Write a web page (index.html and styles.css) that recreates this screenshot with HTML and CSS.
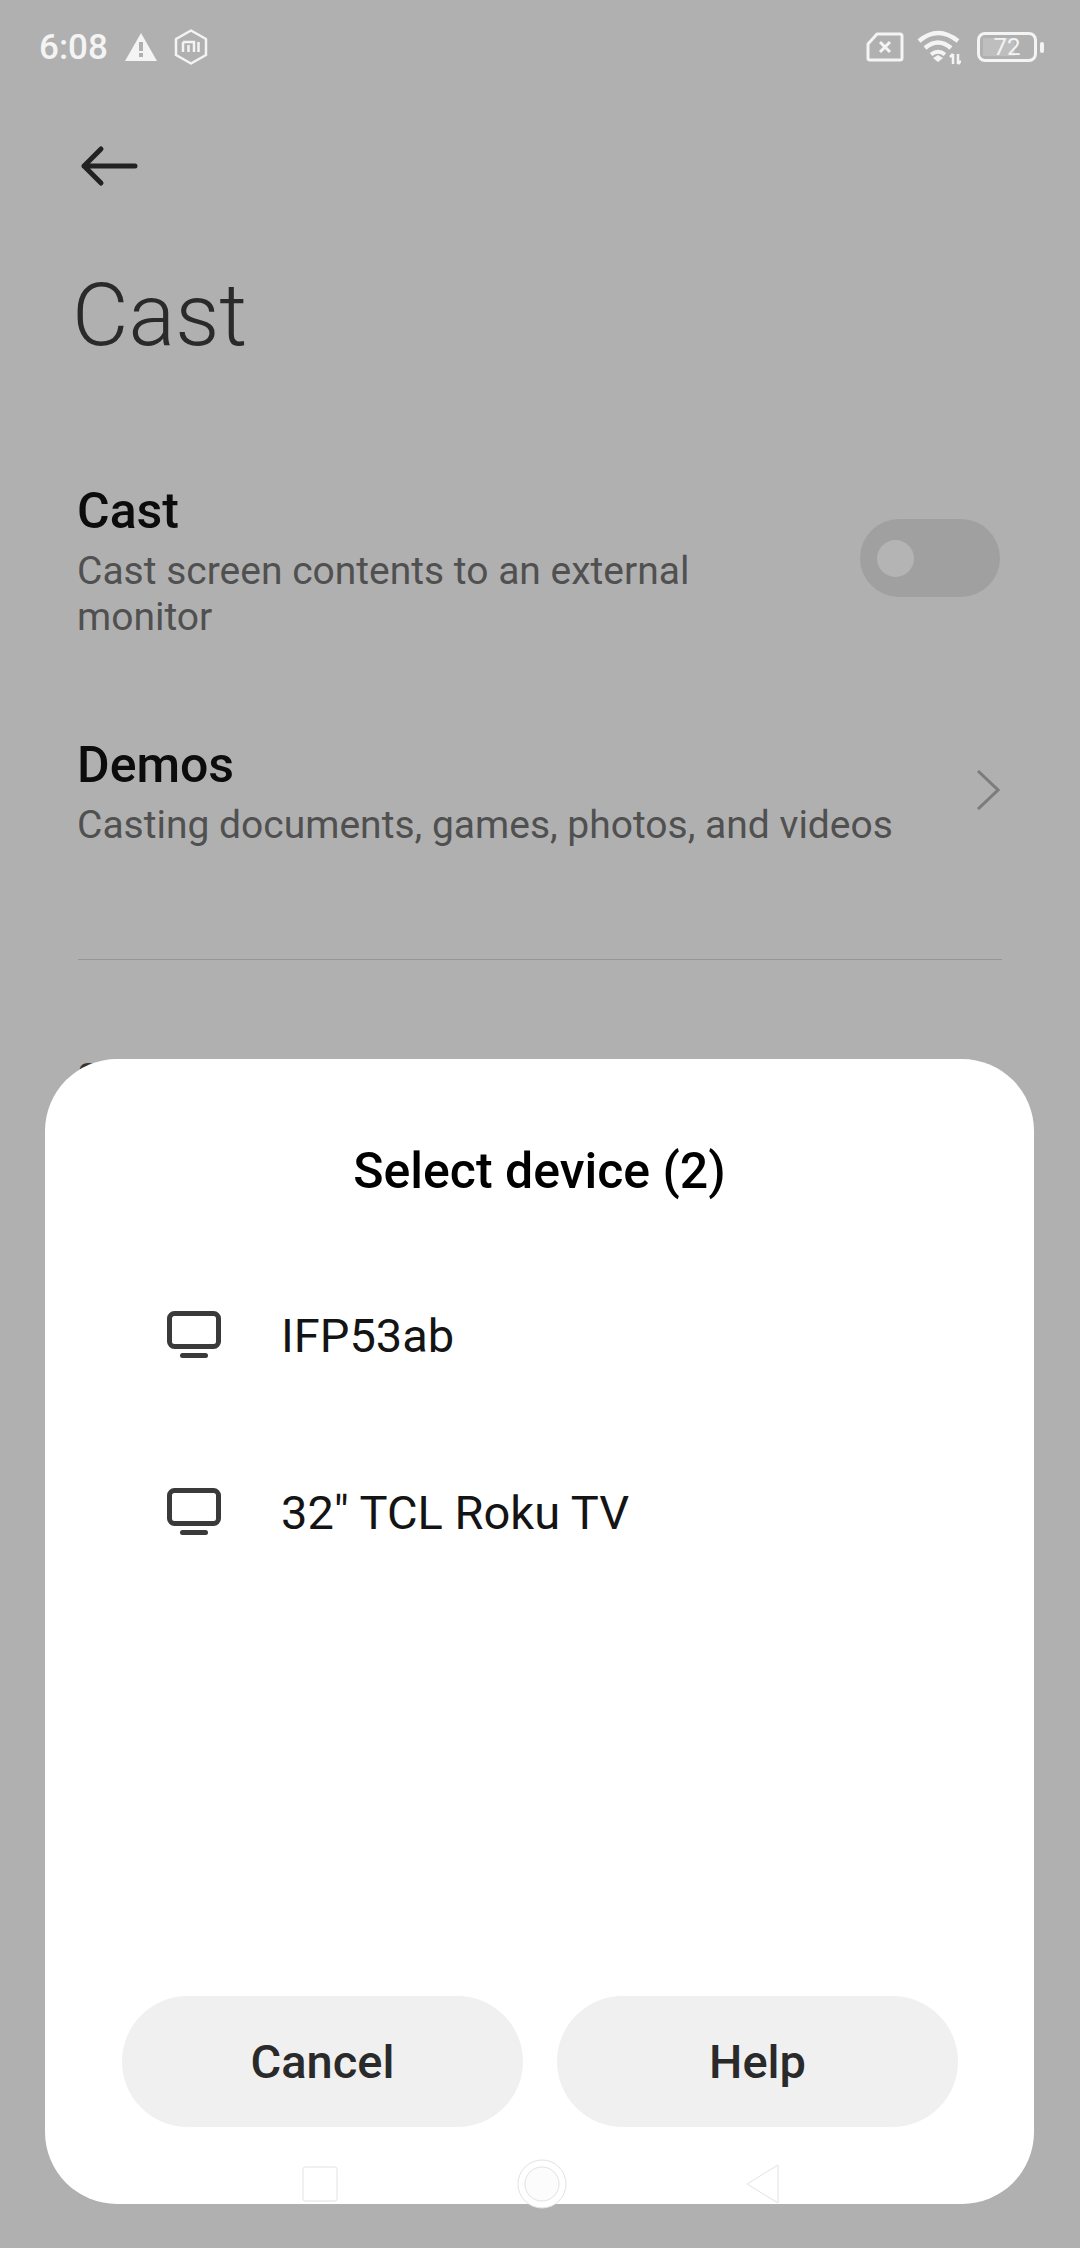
FILE: index.html
```html
<!DOCTYPE html>
<html lang="en">
<head>
    <meta charset="UTF-8">
    <meta name="viewport" content="width=device-width, initial-scale=1.0">
    <title>Cast</title>
    <link rel="stylesheet" href="styles.css">
</head>
<body>
    <div class="screen">
        <div class="status-bar">
            <div class="status-left">
                <span class="clock">6:08</span>
                <svg class="icon-warn" width="32" height="30" viewBox="0 0 32 30">
                    <path d="M16 1 L32 29 H0 Z" fill="#f4f4f4"/>
                    <rect x="14" y="10" width="4" height="9" fill="#b0b0b0"/>
                    <rect x="14" y="21" width="4" height="4" fill="#b0b0b0"/>
                </svg>
                <svg class="icon-mi" width="34" height="36" viewBox="0 0 34 36">
                    <path d="M17 1.5 L32 10 V26 L17 34.5 L2 26 V10 Z" fill="none" stroke="#f4f4f4" stroke-width="2.5" stroke-linejoin="round"/>
                    <path d="M9 13 H20 V23 M9 13 V23 M14.5 16 V23 M24.5 13 V23" fill="none" stroke="#f4f4f4" stroke-width="2.5"/>
                </svg>
            </div>
            <div class="status-right">
                <svg class="icon-sim" width="38" height="30" viewBox="0 0 38 30">
                    <path d="M11 2 H34 Q36 2 36 4 V26 Q36 28 34 28 H4 Q2 28 2 26 V12 Z" fill="none" stroke="#f4f4f4" stroke-width="3" stroke-linejoin="round"/>
                    <path d="M14 10 L24 20 M24 10 L14 20" stroke="#f4f4f4" stroke-width="3"/>
                </svg>
                <svg class="icon-wifi" width="44" height="36" viewBox="0 0 44 36">
                    <path d="M2 11 Q21 -5 41 11" fill="none" stroke="#f4f4f4" stroke-width="4.5"/>
                    <path d="M8 18 Q21 7 34 18" fill="none" stroke="#f4f4f4" stroke-width="4.5"/>
                    <path d="M14 24.5 Q21 19 28 24.5" fill="none" stroke="#f4f4f4" stroke-width="4"/>
                    <path d="M16 28 L21 25 L26 28 L21 32 Z" fill="#f4f4f4"/>
                    <path d="M36 34 V24 M33 27 L36 24 M41 24 V34 M44 31 L41 34" fill="none" stroke="#f4f4f4" stroke-width="2.5"/>
                </svg>
                <div class="battery">
                    <div class="battery-body">
                        <div class="battery-fill"></div>
                        <span class="battery-num">72</span>
                    </div>
                    <div class="battery-tip"></div>
                </div>
            </div>
        </div>

        <div class="back-row">
            <svg width="60" height="42" viewBox="0 0 60 42">
                <path d="M4 21 H55 M21 4 L4 21 L21 38" fill="none" stroke="#222" stroke-width="5" stroke-linecap="round" stroke-linejoin="round"/>
            </svg>
        </div>

        <h1 class="page-title">Cast</h1>

        <div class="setting-row row-cast">
            <div class="setting-text">
                <div class="setting-name">Cast</div>
                <div class="setting-desc">Cast screen contents to an external monitor</div>
            </div>
            <div class="toggle"><div class="toggle-knob"></div></div>
        </div>

        <div class="setting-row row-demos">
            <div class="setting-text">
                <div class="setting-name">Demos</div>
                <div class="setting-desc nowrap">Casting documents, games, photos, and videos</div>
            </div>
            <svg class="chevron" width="24" height="40" viewBox="0 0 24 40">
                <path d="M2 1 L22 20 L2 39" fill="none" stroke="#7c7c7c" stroke-width="3"/>
            </svg>
        </div>

        <div class="divider"></div>
        <div class="section-name">Supported</div>

        <div class="dialog">
            <h2 class="dialog-title">Select device (2)</h2>
            <div class="device-list">
                <div class="device">
                    <svg width="54" height="48" viewBox="0 0 54 48">
                        <rect x="2.5" y="2.5" width="49" height="33" rx="5" fill="none" stroke="#3a3a3a" stroke-width="5"/>
                        <path d="M15.5 44.5 H38.5" stroke="#3a3a3a" stroke-width="5" stroke-linecap="round"/>
                    </svg>
                    <span>IFP53ab</span>
                </div>
                <div class="device">
                    <svg width="54" height="48" viewBox="0 0 54 48">
                        <rect x="2.5" y="2.5" width="49" height="33" rx="5" fill="none" stroke="#3a3a3a" stroke-width="5"/>
                        <path d="M15.5 44.5 H38.5" stroke="#3a3a3a" stroke-width="5" stroke-linecap="round"/>
                    </svg>
                    <span>32" TCL Roku TV</span>
                </div>
            </div>
            <div class="dialog-buttons">
                <button class="dialog-btn">Cancel</button>
                <button class="dialog-btn">Help</button>
            </div>
            <div class="nav-bar">
                <svg class="nav-square" width="36" height="36" viewBox="0 0 36 36">
                    <rect x="1" y="1" width="34" height="34" rx="2" fill="none" stroke="#e2e2e2" stroke-width="1"/>
                </svg>
                <svg class="nav-home" width="50" height="50" viewBox="0 0 50 50">
                    <circle cx="25" cy="25" r="24" fill="#fff" stroke="#e2e2e2"/>
                    <circle cx="25" cy="25" r="17" fill="#fcfcfc" stroke="#e2e2e2"/>
                </svg>
                <svg width="34" height="40" viewBox="0 0 34 40">
                    <path d="M32 1 V39 L1 20 Z" fill="none" stroke="#e2e2e2" stroke-width="1" stroke-linejoin="round"/>
                </svg>
            </div>
        </div>
    </div>
</body>
</html>
```

FILE: styles.css
```css
* {
    margin: 0;
    padding: 0;
    box-sizing: border-box;
}

body {
    font-family: Roboto, "Noto Sans", sans-serif;
    background: #b0b0b0;
}

.screen {
    position: relative;
    width: 1080px;
    height: 2248px;
    overflow: hidden;
    background: #b0b0b0;
}

.status-bar {
    display: flex;
    justify-content: space-between;
    align-items: center;
    height: 94px;
    padding: 0 36px 0 39px;
}

.status-left {
    display: flex;
    align-items: center;
}

.clock {
    color: #f4f4f4;
    font-size: 35px;
    font-weight: 500;
    width: 86px;
}

.icon-warn {
    margin-right: 17px;
}

.status-right {
    display: flex;
    align-items: center;
}

.icon-sim {
    margin-right: 13px;
}

.icon-wifi {
    margin: 2px 16px 0 0;
}

.battery {
    display: flex;
    align-items: center;
    gap: 3px;
}

.battery-body {
    position: relative;
    width: 60px;
    height: 30px;
    border: 3px solid #f4f4f4;
    border-radius: 8px;
    display: flex;
    align-items: center;
    justify-content: center;
}

.battery-fill {
    position: absolute;
    left: 3px;
    top: 3px;
    bottom: 3px;
    width: 32px;
    background: #bebebe;
}

.battery-num {
    position: relative;
    color: #f4f4f4;
    font-size: 24px;
    line-height: 24px;
}

.battery-tip {
    width: 4px;
    height: 11px;
    border-radius: 2px;
    background: #f4f4f4;
}

.back-row {
    padding: 51px 0 0 80px;
    height: 91px;
}

.page-title {
    font-size: 87px;
    font-weight: 300;
    color: #2a2a2a;
    line-height: 100px;
    margin: 80px 0 0 72px;
}

.setting-row {
    display: flex;
    justify-content: space-between;
    align-items: center;
}

.row-cast {
    padding: 0 80px 0 77px;
    margin-top: 118px;
}

.row-demos {
    padding: 0 80px 0 77px;
    margin-top: 97px;
}

.setting-text {
    width: 640px;
}

.setting-name {
    font-size: 50px;
    font-weight: 500;
    color: #0c0c0c;
    line-height: 56px;
    margin-bottom: 9px;
}

.setting-desc {
    font-size: 39px;
    color: #505050;
    line-height: 46px;
}

.nowrap {
    white-space: nowrap;
}

.toggle {
    width: 140px;
    height: 78px;
    border-radius: 39px;
    background: #a0a0a0;
    padding: 21px 17px;
    margin-bottom: 8px;
}

.toggle-knob {
    width: 37px;
    height: 37px;
    border-radius: 50%;
    background: #b4b4b4;
}

.chevron {
    margin-bottom: 5px;
}

.divider {
    height: 1px;
    background: #969696;
    margin: 111px 78px 0;
}

.section-name {
    margin: 96px 0 0 78px;
    font-size: 33px;
    font-weight: 500;
    color: #333;
}

.dialog {
    position: absolute;
    left: 45px;
    top: 1059px;
    width: 989px;
    height: 1145px;
    background: #fff;
    border-radius: 72px;
    display: flex;
    flex-direction: column;
}

.dialog-title {
    text-align: center;
    font-size: 50px;
    font-weight: 500;
    color: #000;
    line-height: 60px;
    margin-top: 82px;
}

.device-list {
    flex: 1;
    padding: 107px 0 0 122px;
    display: flex;
    flex-direction: column;
    gap: 123px;
}

.device {
    display: flex;
    align-items: center;
    gap: 60px;
    height: 54px;
    font-size: 47px;
    color: #141414;
}

.dialog-buttons {
    display: flex;
    justify-content: space-between;
    padding: 0 76px 0 77px;
}

.dialog-btn {
    width: 401px;
    height: 131px;
    border: none;
    border-radius: 66px;
    background: #f0f0f0;
    font-family: Roboto, sans-serif;
    font-size: 47px;
    font-weight: 500;
    color: #2a2a2a;
}

.nav-bar {
    display: flex;
    align-items: center;
    height: 77px;
    padding: 36px 0 0 257px;
    gap: 179px;
}
```
